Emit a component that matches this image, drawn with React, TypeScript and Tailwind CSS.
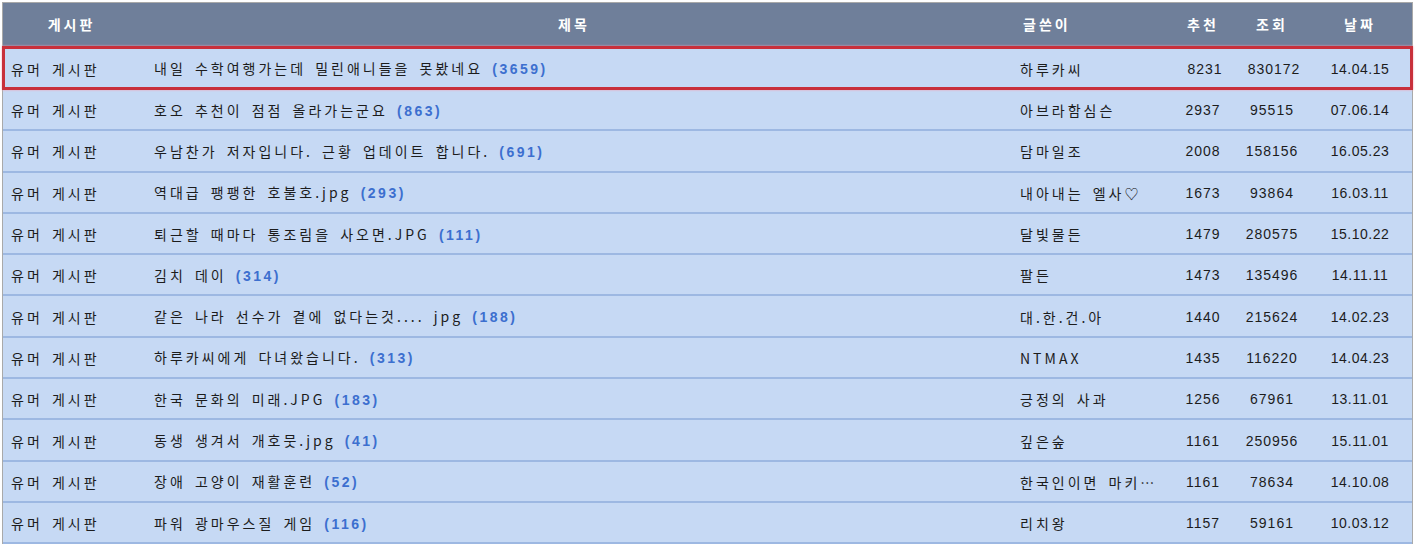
const rows = [
  { title: "내일 수학여행가는데 밀린애니들을 못봤네요", count: 3659, author: "하루카씨", rec: 8231, views: 830172, date: "14.04.15" },
  { title: "호오 추천이 점점 올라가는군요", count: 863, author: "아브라함심슨", rec: 2937, views: 95515, date: "07.06.14" },
  { title: "우남찬가 저자입니다. 근황 업데이트 합니다.", count: 691, author: "담마일조", rec: 2008, views: 158156, date: "16.05.23" },
  { title: "역대급 팽팽한 호불호.jpg", count: 293, author: "내아내는 엘사♡", rec: 1673, views: 93864, date: "16.03.11" },
  { title: "퇴근할 때마다 통조림을 사오면.JPG", count: 111, author: "달빛물든", rec: 1479, views: 280575, date: "15.10.22" },
  { title: "김치 데이", count: 314, author: "팔든", rec: 1473, views: 135496, date: "14.11.11" },
  { title: "같은 나라 선수가 곁에 없다는것.... jpg", count: 188, author: "대.한.건.아", rec: 1440, views: 215624, date: "14.02.23" },
  { title: "하루카씨에게 다녀왔습니다.", count: 313, author: "NTMAX", rec: 1435, views: 116220, date: "14.04.23" },
  { title: "한국 문화의 미래.JPG", count: 183, author: "긍정의 사과", rec: 1256, views: 67961, date: "13.11.01" },
  { title: "동생 생겨서 개호뭇.jpg", count: 41, author: "깊은숲", rec: 1161, views: 250956, date: "15.11.01" },
  { title: "장애 고양이 재활훈련", count: 52, author: "한국인이면 마키…", rec: 1161, views: 78634, date: "14.10.08" },
  { title: "파워 광마우스질 게임", count: 116, author: "리치왕", rec: 1157, views: 59161, date: "10.03.12" },
];

const cols = "grid grid-cols-[137px_868px_162px_66px_72px_1fr] items-center";
const num = { fontFamily: '"Liberation Sans", sans-serif' };

export default function App() {
  return (
    <div
      className="w-[1417px] h-[546px] overflow-hidden bg-white pt-[2px] pl-[2px]"
      style={{ fontFamily: '"Noto Sans CJK KR", "Liberation Sans", sans-serif' }}
    >
      <div className="w-[1411px] border-t border-l border-r border-[#a9a9a9] bg-[#c6d9f4]">
        {/* header */}
        <div className={`${cols} h-[43px] bg-[#6f7f9a] text-white font-bold text-[14px] tracking-[3px]`}>
          <div className="text-center">게시판</div>
          <div className="text-center">제목</div>
          <div className="pl-[15px]">글쓴이</div>
          <div className="text-center">추천</div>
          <div className="text-center">조회</div>
          <div className="text-center">날짜</div>
        </div>

        {rows.map((r, i) => {
          const first = i === 0;
          return (
            <div
              key={i}
              className={
                first
                  ? `${cols} h-[44px] -ml-px -mr-px border-[3px] border-[#c8303b] shadow-[0_0_2px_#f4a0b0] relative pt-[2px]`
                  : `${cols} h-[41.3px] border-b-2 border-[#9db8e2] pt-[2px]`
              }
            >
              <div className={`${first ? "pl-[6px]" : "pl-[8px]"} text-[14px] tracking-[3px] [word-spacing:3px] text-[#1c1c1c]`}>
                유머 게시판
              </div>
              <div className={`${first ? "pl-[12px]" : "pl-[14px]"} text-[14px] tracking-[3px] [word-spacing:3px] text-[#1c1c1c] whitespace-nowrap`}>
                {r.title}{" "}
                <span className="text-[#3c6fcf] font-semibold tracking-[2.5px]" style={num}>
                  ({r.count})
                </span>
              </div>
              <div className={`${first ? "pl-[10px]" : "pl-[12px]"} text-[14px] tracking-[3px] [word-spacing:3px] text-[#1c1c1c] whitespace-nowrap`}>
                {r.author}
              </div>
              <div className="text-center text-[14px] tracking-[1px] text-[#1c1c1c]" style={num}>
                {r.rec}
              </div>
              <div className="text-center text-[14px] tracking-[1px] text-[#1c1c1c]" style={num}>
                {r.views}
              </div>
              <div className="text-center text-[14px] tracking-[0.5px] text-[#1c1c1c]" style={num}>
                {r.date}
              </div>
            </div>
          );
        })}
      </div>
    </div>
  );
}
